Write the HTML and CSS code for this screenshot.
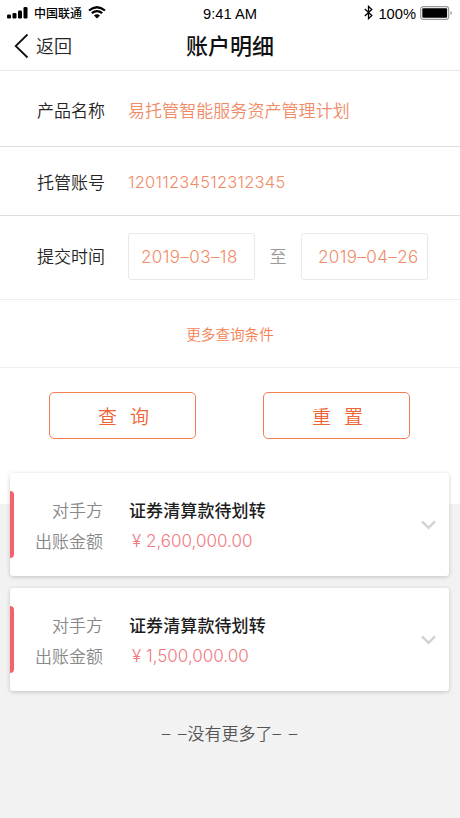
FILE: index.html
```html
<!DOCTYPE html>
<html lang="zh-CN">
<head>
<meta charset="utf-8">
<meta name="viewport" content="width=device-width, initial-scale=1">
<title>账户明细</title>
<link rel="stylesheet" href="styles.css">
</head>
<body>
<header class="header">
  <div class="status">
    <div class="status-left">
      <svg class="signal" width="22" height="13" viewBox="0 0 22 13"><rect x="0" y="8.5" width="4" height="4" rx="1.2"/><rect x="5.5" y="7" width="4" height="5.5" rx="1.2"/><rect x="11" y="4.5" width="4" height="8" rx="1.2"/><rect x="16.5" y="1" width="4" height="11.5" rx="1.2"/></svg>
      <span class="carrier">中国联通</span>
      <svg class="wifi" width="18" height="13" viewBox="0 0 18 13"><path d="M1 4.5Q9-2 17 4.5M3.8 7.2Q9 3 14.2 7.2" fill="none" stroke="#000" stroke-width="2.2"/><path d="M6 9.4Q9 7 12 9.4L9 12.4Z"/></svg>
    </div>
    <div class="clock">9:41 AM</div>
    <div class="status-right">
      <svg class="bluetooth" width="9" height="15" viewBox="0 0 9 15"><path d="M.8 4 7.8 10.4 4.5 13.6V1.4L7.8 4.6.8 11" fill="none" stroke="#000" stroke-width="1.3"/></svg>
      <span class="percent">100%</span>
      <svg class="battery" width="33" height="14" viewBox="0 0 33 14"><rect x=".7" y=".7" width="28" height="12.6" rx="2.5" fill="#fff" stroke="#999" stroke-width="1.2"/><rect x="2.3" y="2.3" width="24.8" height="9.4" rx="1"/><path d="M30.5 5v4Q32 8.5 32 7T30.5 5Z" fill="#999"/></svg>
    </div>
  </div>
  <div class="nav">
    <a class="back"><svg width="15" height="26" viewBox="0 0 15 26"><path d="M13.5 1.5 1.7 13 13.5 24.5" fill="none" stroke="#111" stroke-width="1.8"/></svg><span>返回</span></a>
    <h1 class="title">账户明细</h1>
  </div>
</header>
<main>
  <section class="row row-product"><span class="label">产品名称</span><span class="value">易托管智能服务资产管理计划</span></section>
  <section class="row row-account"><span class="label">托管账号</span><span class="value account">12011234512312345</span></section>
  <section class="row row-dates"><span class="label">提交时间</span><span class="date">2019–03–18</span><span class="to">至</span><span class="date date-end">2019–04–26</span></section>
  <a class="more">更多查询条件</a>
  <div class="actions"><button class="button">查<span class="gap"></span>询</button><button class="button">重<span class="gap"></span>置</button></div>
  <div class="cards">
    <article class="card">
      <dl class="details"><dt>对手方</dt><dd class="party">证券清算款待划转</dd><dt>出账金额</dt><dd class="amount"><span class="yen">¥</span>2,600,000.00</dd></dl>
      <svg class="chevron" width="15" height="10" viewBox="0 0 15 10"><path d="M1 1.3 7.5 7.8 14 1.3" fill="none" stroke="#d2d2d2" stroke-width="2.4"/></svg>
    </article>
    <article class="card">
      <dl class="details"><dt>对手方</dt><dd class="party">证券清算款待划转</dd><dt>出账金额</dt><dd class="amount"><span class="yen">¥</span>1,500,000.00</dd></dl>
      <svg class="chevron" width="15" height="10" viewBox="0 0 15 10"><path d="M1 1.3 7.5 7.8 14 1.3" fill="none" stroke="#d2d2d2" stroke-width="2.4"/></svg>
    </article>
  </div>
  <p class="end"><span class="dashes">– –</span>没有更多了<span class="dashes">– –</span></p>
</main>
</body>
</html>
```
FILE: styles.css
```css
* { box-sizing: border-box; }
body {
  margin: 0;
  height: 818px;
  overflow: hidden;
  background: linear-gradient(#fff 504px, #f2f2f2 504px);
  color: #242424;
  font: 17px/24px "Noto Sans CJK SC", sans-serif;
}
svg { display: block; flex: none; }
.header { height: 71px; border-bottom: 1px solid #e8e8e8; }
.status {
  display: grid;
  grid-template-columns: 1fr auto 1fr;
  height: 25px;
  padding: 0 7px 0 7px;
  align-items: center;
  color: #000;
}
.status-left, .status-right { display: flex; align-items: center; }
.status-right { justify-content: flex-end; }
.carrier { margin-left: 5px; font-size: 12px; font-weight: 500; }
.wifi { margin-left: 6px; }
.clock { padding-top: 3px; font: 14.7px "Liberation Sans", sans-serif; }
.percent { margin: 3px 4px 0 5px; font: 14.7px "Liberation Sans", sans-serif; }
.nav {
  display: grid;
  grid-template-columns: 1fr auto 1fr;
  height: 41px;
  padding: 0 14px;
  align-items: center;
}
.back { display: flex; align-items: center; gap: 7px; font-size: 18px; font-weight: 350; }
.back span { margin-top: -2px; }
.title { margin: -4px 0 0; color: #111; font-size: 22px; font-weight: 500; line-height: 32px; }
.row { display: flex; align-items: center; padding-left: 37px; border-bottom: 1px solid #dedede; }
.row-product { height: 76px; padding-top: 2px; }
.row-account { height: 69px; padding-top: 1px; }
.row-dates { height: 84px; padding-bottom: 3px; border-color: #eee; }
.label { width: 91px; flex: none; font-weight: 350; }
.row-dates .label, .to { margin-top: -1px; }
.value { color: #f18b67; font-weight: 350; letter-spacing: .06px; }
.account { font-family: Inter, sans-serif; font-size: 16.5px; font-weight: 300; letter-spacing: .23px; }
.date {
  width: 127px;
  height: 47px;
  padding-left: 12px;
  border: 1px solid #e9e9e9;
  border-radius: 3px;
  color: #f18b67;
  font: 300 17px/47px Inter, sans-serif;
  letter-spacing: .4px;
  white-space: nowrap;
}
.date-end { padding-left: 16px; }
.to { width: 46px; text-align: center; color: #999; font-weight: 350; }
.more {
  display: flex;
  height: 68px;
  align-items: center;
  justify-content: center;
  border-bottom: 1px solid #eee;
  color: #f47d51;
  font-size: 14.6px;
  font-weight: 350;
}
.actions { display: flex; justify-content: space-between; padding: 24px 50px 0 49px; }
.button {
  width: 147px;
  height: 47px;
  padding: 0 0 0 2px;
  border: 1.5px solid #f47d51;
  border-radius: 5px;
  background: #fff;
  color: #ef6334;
  font: 350 19px/43px "Noto Sans CJK SC", sans-serif;
}
.gap { display: inline-block; width: 13px; }
.cards { display: grid; gap: 12px; padding: 34px 11px 0 10px; }
.card {
  position: relative;
  display: flex;
  height: 103px;
  padding: 0 13px 0 23px;
  align-items: center;
  justify-content: space-between;
  border-radius: 3px;
  background: #fff;
  box-shadow: 0 1px 4px #0003;
}
.card::before {
  content: "";
  position: absolute;
  left: 0;
  top: 18px;
  width: 4px;
  height: 67px;
  border-radius: 0 4px 4px 0;
  background: #f4626b;
}
.details { display: grid; grid-template-columns: 70px auto; column-gap: 26px; margin: 0; line-height: 31px; }
.details dt { text-align: right; color: #888; font-weight: 350; }
.details dd { margin: 0; }
.party { color: #1d1d1d; font-weight: 500; letter-spacing: .1px; }
.details .amount { padding-top: 1px; line-height: 30px; color: #f17882; font-family: Inter, sans-serif; font-size: 17px; font-weight: 300; }
.yen { display: inline-block; width: 17px; padding-left: 3px; }
.end { margin: 30px 0 0; text-align: center; color: #555; font-weight: 350; }
.dashes { font-family: Inter, sans-serif; letter-spacing: 1px; word-spacing: 1px; }
```
